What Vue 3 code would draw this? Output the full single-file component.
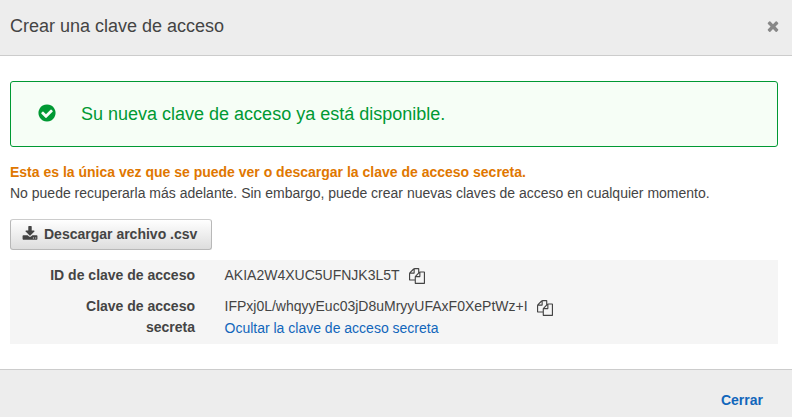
<script setup>
const paths = {
  check: 'M1412 734q0-28-18-46l-91-90q-19-19-45-19t-45 19l-408 407-226-226q-19-19-45-19t-45 19l-91 90q-18 18-18 46 0 27 18 45l362 362q19 19 45 19 27 0 46-19l543-543q18-18 18-45zm252 162q0 209-103 385.5t-279.5 279.5-385.5 103-385.5-103-279.5-279.5-103-385.5 103-385.5 279.5-279.5 385.5-103 385.5 103 279.5 279.5 103 385.5z',
  times: 'M1490 1322q0 40-28 68l-136 136q-28 28-68 28t-68-28l-294-294-294 294q-28 28-68 28t-68-28l-136-136q-28-28-28-68t28-68l294-294-294-294q-28-28-28-68t28-68l136-136q28-28 68-28t68 28l294 294 294-294q28-28 68-28t68 28l136 136q28 28 28 68t-28 68l-294 294 294 294q28 28 28 68z',
  download: 'M1344 1344q0-26-19-45t-45-19-45 19-19 45 19 45 45 19 45-19 19-45zm256 0q0-26-19-45t-45-19-45 19-19 45 19 45 45 19 45-19 19-45zm128-224v320q0 40-28 68t-68 28h-1472q-40 0-68-28t-28-68v-320q0-40 28-68t68-28h465l135 136q58 56 136 56t136-56l136-136h464q40 0 68 28t28 68zm-325-569q17 41-14 70l-448 448q-18 19-45 19t-45-19l-448-448q-31-29-14-70 17-39 59-39h256v-448q0-26 19-45t45-19h256q26 0 45 19t19 45v448h256q42 0 59 39z',
  copy: 'M1696 384q40 0 68 28t28 68v1216q0 40-28 68t-68 28h-960q-40 0-68-28t-28-68v-288h-544q-40 0-68-28t-28-68v-672q0-40 20-88t48-76l408-408q28-28 76-48t88-20h416q40 0 68 28t28 68v328q68-40 128-40h416zm-544 213l-299 299h299v-299zm-640-384l-299 299h299v-299zm196 647l316-316v-416h-384v416q0 40-28 68t-68 28h-416v640h512v-256q0-40 20-88t48-76zm956 804v-1152h-384v416q0 40-28 68t-68 28h-416v640h896z',
}
</script>

<template>
  <div class="modal">
    <header class="head">
      <h1 class="title">Crear una clave de acceso</h1>
      <svg class="close" viewBox="0 0 1792 1792"><path :d="paths.times" /></svg>
    </header>
    <main class="body">
      <div class="alert">
        <svg class="check" viewBox="0 0 1792 1792"><path :d="paths.check" /></svg>
        <span class="alert-text">Su nueva clave de acceso ya está disponible.</span>
      </div>
      <p class="warning">Esta es la única vez que se puede ver o descargar la clave de acceso secreta.</p>
      <p class="note">No puede recuperarla más adelante. Sin embargo, puede crear nuevas claves de acceso en cualquier momento.</p>
      <button class="download">
        <svg class="download-icon" viewBox="0 0 1792 1792"><path :d="paths.download" /></svg>
        <span>Descargar archivo .csv</span>
      </button>
      <dl class="keys">
        <dt>ID de clave de acceso</dt>
        <dd>
          <div class="value"><span class="id">AKIA2W4XUC5UFNJK3L5T</span><svg class="copy" viewBox="0 0 1792 1792"><path :d="paths.copy" /></svg></div>
        </dd>
        <dt>Clave de acceso secreta</dt>
        <dd>
          <div class="value"><span class="secret">IFPxj0L/whqyyEuc03jD8uMryyUFAxF0XePtWz+I</span><svg class="copy low" viewBox="0 0 1792 1792"><path :d="paths.copy" /></svg></div>
          <a class="hide">Ocultar la clave de acceso secreta</a>
        </dd>
      </dl>
    </main>
    <footer class="foot"><a class="cerrar">Cerrar</a></footer>
  </div>
</template>

<style>
body { overflow: hidden; background: #fff; }
</style>

<style scoped>
.modal {
  display: flex;
  flex-direction: column;
  height: 417px;
  box-sizing: border-box;
  font: 14px/21px "Liberation Sans", Arial, sans-serif;
  color: #444;
}
svg { display: block; flex: none; fill: currentColor; }
p, h1, dl, dd { margin: 0; }
.head {
  display: flex;
  align-items: center;
  justify-content: space-between;
  height: 52px;
  padding: 0 11px 3px 10px;
  background: #ededed;
  border-bottom: 1px solid #ccc;
}
.title { font-size: 18px; font-weight: 400; line-height: 24px; }
.close { width: 16px; height: 16px; color: #888; }
.body { flex: 1; padding: 25px 14px 0 10px; }
.alert {
  display: flex;
  align-items: center;
  gap: 24px;
  height: 66px;
  box-sizing: border-box;
  padding-left: 26px;
  border: 1px solid #093;
  border-radius: 3px;
  background: #f6fef6;
  color: #093;
}
.check { width: 20px; height: 20px; margin-top: -2px; }
.alert-text { font-size: 18px; line-height: 24px; }
.warning { margin-top: 15px; font-weight: 700; color: #e07700; white-space: nowrap; }
.note { white-space: nowrap; }
.download {
  display: flex;
  align-items: center;
  gap: 6px;
  width: 202px;
  height: 31px;
  margin-top: 15px;
  padding: 0 0 0 11px;
  font: inherit;
  font-weight: 700;
  color: #444;
  white-space: nowrap;
  border: 1px solid #b8b8b8;
  border-top-color: #ccc;
  border-radius: 3px;
  background: linear-gradient(#fff, #ddd);
}
.download-icon { width: 16px; height: 16px; margin-top: -2px; }
.keys {
  display: grid;
  grid-template-columns: 185px 1fr;
  column-gap: 29.5px;
  row-gap: 10px;
  height: 84px;
  box-sizing: border-box;
  margin-top: 10px;
  padding-top: 5px;
  align-content: start;
  background: #f5f5f5;
}
dt { padding-left: 30px; font-weight: 700; text-align: right; }
.value { display: flex; height: 21px; gap: 9.5px; }
.copy { width: 16px; height: 16px; margin-top: 3px; }
.low { margin-top: 4px; }
.hide { display: block; line-height: 23px; color: #1166bb; }
.foot {
  display: flex;
  justify-content: flex-end;
  height: 48px;
  box-sizing: border-box;
  padding: 20px 29px 0 0;
  border-top: 1px solid #ccc;
  background: #ededed;
}
.cerrar { font-weight: 700; color: #1166bb; }
</style>
